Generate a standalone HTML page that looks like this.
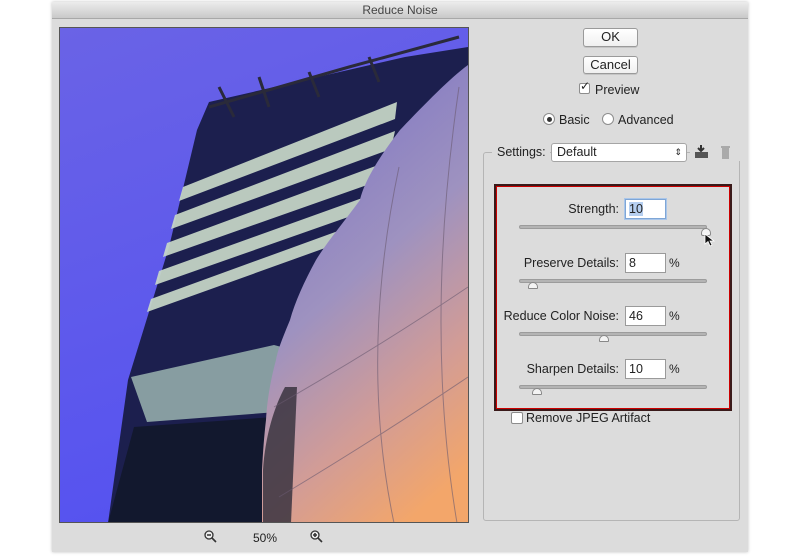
<!DOCTYPE html>
<html><head><style>
*{margin:0;padding:0;box-sizing:border-box}
body{width:800px;height:556px;background:#fff;position:relative;overflow:hidden;font-family:"Liberation Sans",sans-serif;font-size:12px;color:#222}
.a{position:absolute}
.dlg{left:52px;top:2px;width:696px;height:550px;background:#dcdcdc;box-shadow:0 0 3px rgba(0,0,0,.25)}
.title{left:52px;top:2px;width:696px;height:17px;background:linear-gradient(#ececec,#c9c9c9);border-bottom:1px solid #a8a8a8;text-align:center;line-height:16px;font-size:12px;color:#444}
.btn{background:linear-gradient(#fff,#f0f0f0);border:1px solid #9a9a9a;border-radius:3px;text-align:center;font-size:13px;line-height:16px;box-shadow:0 1px 0 rgba(0,0,0,.1)}
.cb{width:11px;height:11px;border:1px solid #8d8d8d;background:#fff;border-radius:2px}
.rd{width:12px;height:12px;border:1px solid #8d8d8d;background:#fff;border-radius:50%}
.lbl{font-size:12.5px;text-align:right;width:160px}
.inp{width:41px;height:20px;background:#fff;border:1px solid #9a9a9a;font-size:12.5px;line-height:18px;padding-left:3px}
.trk{height:4px;background:#b4b4b4;border:1px solid #9c9c9c;border-radius:2px;left:519px;width:188px}
.pct{font-size:12px}
</style></head><body>
<div class="a dlg"></div>
<div class="a title">Reduce Noise</div>
<svg class="a" style="left:59px;top:27px" width="410" height="496" viewBox="0 0 410 496">
<defs>
<linearGradient id="sky" x1="0" y1="0" x2="0.3" y2="1"><stop offset="0" stop-color="#6a63e6"/><stop offset="1" stop-color="#5552f0"/></linearGradient>
<linearGradient id="sph" x1="0.3" y1="0" x2="0.7" y2="1"><stop offset="0" stop-color="#7c74c4"/><stop offset="0.45" stop-color="#9e92c0"/><stop offset="0.75" stop-color="#d29c96"/><stop offset="1" stop-color="#f3a66a"/></linearGradient>
</defs>
<rect width="410" height="496" fill="url(#sky)"/>
<polygon points="138,103 150,75 346,30 409,20 409,496 49,496 69,353 110,220" fill="#1c1f4e"/>
<g stroke="#2a2a3a" stroke-width="3" fill="none"><path d="M150,80 L290,40 L400,10"/><path d="M160,60 L175,90 M200,50 L210,80 M250,45 L260,70 M310,30 L320,55"/></g>
<g fill="#c8d8c8" opacity=".92">
<polygon points="124,160 338,75 336,92 120,174"/>
<polygon points="116,188 336,104 332,122 112,202"/>
<polygon points="108,216 330,134 325,152 104,230"/>
<polygon points="100,244 320,165 312,182 96,258"/>
<polygon points="92,272 290,200 280,216 88,285"/>
</g>
<polygon points="72,350 215,318 230,322 218,385 88,395" fill="#9ab4b0" opacity=".85"/>
<polygon points="75,400 215,390 220,496 49,496" fill="#12182e"/>
<path d="M409,38 C390,52 365,78 341,103 C320,130 305,155 301,173 C285,195 268,215 257,233 C245,255 236,275 231,293 C224,310 219,322 217,333 C211,355 208,375 207,393 C205,410 204,425 203,443 L203,496 L410,496 Z" fill="url(#sph)"/>
<path d="M226,360 C215,380 206,410 204,443 L204,496 L232,496 L238,360 Z" fill="#3a3440" opacity=".85"/>
<g stroke="#6a5a70" stroke-width="1" fill="none" opacity=".6">
<path d="M340,140 Q300,330 335,496"/><path d="M400,60 Q365,300 398,496"/><path d="M215,380 Q320,320 409,260"/><path d="M220,470 Q320,410 409,350"/>
</g>
<rect x=".5" y=".5" width="409" height="495" fill="none" stroke="#555" stroke-width="1"/>
</svg>
<div class="a btn" style="left:583px;top:28px;width:55px;height:19px">OK</div>
<div class="a btn" style="left:583px;top:56px;width:55px;height:18px">Cancel</div>
<div class="a cb" style="left:579px;top:83px"></div><div class="a" style="left:580px;top:79px;font-size:12px">✓</div>
<div class="a" style="left:595px;top:83px;font-size:12.5px">Preview</div>
<div class="a rd" style="left:543px;top:113px"></div><div class="a" style="left:547px;top:117px;width:5px;height:5px;border-radius:50%;background:#333"></div>
<div class="a" style="left:559px;top:113px;font-size:12.5px">Basic</div>
<div class="a rd" style="left:602px;top:113px"></div>
<div class="a" style="left:618px;top:113px;font-size:12.5px">Advanced</div>
<div class="a" style="left:483px;top:152px;width:257px;height:369px;border:1px solid #b5b5b5;border-radius:3px"></div>
<div class="a" style="left:492px;top:145px;width:58px;height:16px;background:#dcdcdc;font-size:12.5px;padding-left:5px">Settings:</div>
<div class="a" style="left:551px;top:143px;width:136px;height:19px;background:#fff;border:1px solid #a5a5a5;border-radius:3px;font-size:12.5px;line-height:17px;padding-left:5px">Default<span style="position:absolute;right:4px;top:0;font-size:9px">⇕</span></div>
<div class="a" style="left:690px;top:143px;width:52px;height:18px;background:#dcdcdc"></div>
<svg class="a" style="left:693px;top:144px" width="40" height="18"><path d="M8 1v6M5 4l3 3 3-3" stroke="#333" stroke-width="2" fill="none"/><rect x="2" y="8" width="13" height="6" fill="#555"/><rect x="29" y="4" width="7" height="11" fill="#aaa"/><rect x="28" y="2" width="9" height="2" fill="#aaa"/></svg>
<div class="a" style="left:494px;top:184px;width:238px;height:227px;border:2px solid #3a1a1a;outline:1px solid #c00;outline-offset:-3px"></div>
<div class="a lbl" style="left:459px;top:202px">Strength:</div>
<div class="a inp" style="left:625px;top:199px;border-color:#7fa6d6;box-shadow:0 0 0 1px #a9c6ea"><span style="background:#b6cff0">10</span></div>
<div class="a trk" style="top:225px"></div>
<div class="a" style="left:701px;top:228px;width:10px;height:8px;border:1px solid #888;background:#f4f4f4;border-radius:5px 5px 2px 2px"></div>
<svg class="a" style="left:704px;top:233px" width="12" height="14"><path d="M1 1 L1 11 L4 8.5 L6 13 L8 12 L6 8 L10 8 Z" fill="#111" stroke="#fff" stroke-width=".8"/></svg>
<div class="a lbl" style="left:459px;top:256px">Preserve Details:</div>
<div class="a inp" style="left:625px;top:253px">8</div><div class="a pct" style="left:669px;top:256px">%</div>
<div class="a trk" style="top:279px"></div>
<div class="a" style="left:528px;top:282px;width:10px;height:7px;border:1px solid #888;background:#f4f4f4;border-radius:5px 5px 1px 1px"></div>
<div class="a lbl" style="left:459px;top:309px">Reduce Color Noise:</div>
<div class="a inp" style="left:625px;top:306px">46</div><div class="a pct" style="left:669px;top:309px">%</div>
<div class="a trk" style="top:332px"></div>
<div class="a" style="left:599px;top:335px;width:10px;height:7px;border:1px solid #888;background:#f4f4f4;border-radius:5px 5px 1px 1px"></div>
<div class="a lbl" style="left:459px;top:362px">Sharpen Details:</div>
<div class="a inp" style="left:625px;top:359px">10</div><div class="a pct" style="left:669px;top:362px">%</div>
<div class="a trk" style="top:385px"></div>
<div class="a" style="left:532px;top:388px;width:10px;height:7px;border:1px solid #888;background:#f4f4f4;border-radius:5px 5px 1px 1px"></div>
<div class="a cb" style="left:511px;top:412px;width:12px;height:12px"></div>
<div class="a" style="left:526px;top:411px;font-size:12.5px">Remove JPEG Artifact</div>
<svg class="a" style="left:204px;top:530px" width="14" height="14"><circle cx="5" cy="5" r="4" fill="#eee" stroke="#333" stroke-width="1.3"/><path d="M3 5h4M8 8l4 4" stroke="#333" stroke-width="1.6"/></svg>
<div class="a" style="left:253px;top:531px;font-size:12px">50%</div>
<svg class="a" style="left:310px;top:530px" width="14" height="14"><circle cx="5" cy="5" r="4" fill="#eee" stroke="#333" stroke-width="1.3"/><path d="M3 5h4M5 3v4M8 8l4 4" stroke="#333" stroke-width="1.6"/></svg>
</body></html>
